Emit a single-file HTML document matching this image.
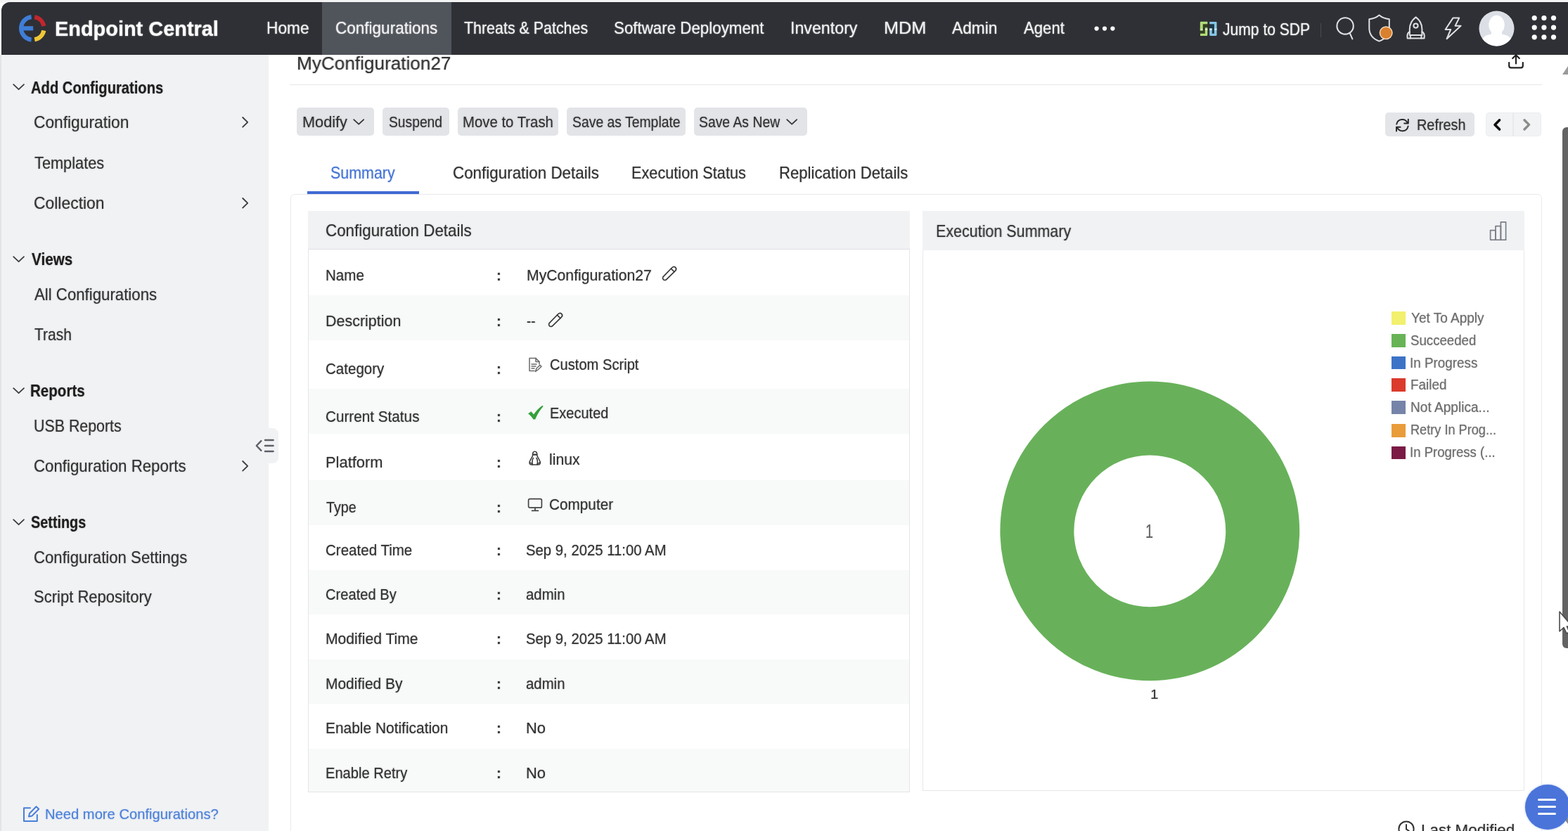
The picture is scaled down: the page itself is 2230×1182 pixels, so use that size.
<!DOCTYPE html>
<html lang="en">
<head>
<meta charset="utf-8">
<title>Endpoint Central - MyConfiguration27</title>
<style>
html,body{margin:0;padding:0;}
body{width:2230px;height:1182px;overflow:hidden;background:#fff;position:relative;font-family:"Liberation Sans",Arial,sans-serif;}
#app{position:absolute;left:0;top:0;width:2230px;height:1182px;overflow:hidden;will-change:transform;}
.t{position:absolute;white-space:nowrap;line-height:1;transform-origin:0 0;display:block;}
svg{overflow:visible;}
</style>
</head>
<body>
<div id="app">
<header>
<div style="position:absolute;left:0px;top:0px;width:2230px;height:4px;background:#f4f4f4;"></div>
<div style="position:absolute;left:1.5px;top:2.5px;width:2230px;height:75.5px;background:#2e3035;border-top-left-radius:12px;"></div>
<div style="position:absolute;left:458px;top:2.5px;width:183.6px;height:75.5px;background:#50545b;"></div>
<svg style="position:absolute;left:20px;top:15px;" width="52" height="52" viewBox="0 0 52 52">
<g fill="none" stroke-width="6.2" stroke-linecap="butt">
<path d="M24.6 9.1 A16.3 16.3 0 0 0 24.6 41.5" stroke="#3f7dd6"/>
<path d="M10 25.3 H27.2" stroke="#3f7dd6"/>
<path d="M29.2 9.3 A16.3 16.3 0 0 1 42.3 22.2" stroke="#c2262e"/>
<path d="M42.3 28.4 A16.3 16.3 0 0 1 29.2 41.3" stroke="#efc736"/>
</g></svg>
<span class="t" style="left:78.22px;top:27px;font-size:28.7px;color:#ffffff;transform:scaleX(1.0077);font-weight:700;text-shadow:0 0 1.7px rgba(255,255,255,0.85);">Endpoint Central</span>
<nav>
<span class="t" style="left:379.49px;top:29px;font-size:23.2px;color:#f2f2f2;transform:scaleX(0.9792);text-shadow:0 0 1.7px rgba(242,242,242,0.85);">Home</span>
<span class="t" style="left:476.81px;top:29px;font-size:23.2px;color:#f2f2f2;transform:scaleX(0.9714);text-shadow:0 0 1.7px rgba(242,242,242,0.85);">Configurations</span>
<span class="t" style="left:659.87px;top:29px;font-size:23.2px;color:#f2f2f2;transform:scaleX(0.9235);text-shadow:0 0 1.7px rgba(242,242,242,0.85);">Threats &amp; Patches</span>
<span class="t" style="left:873.34px;top:29px;font-size:23.2px;color:#f2f2f2;transform:scaleX(0.9630);text-shadow:0 0 1.7px rgba(242,242,242,0.85);">Software Deployment</span>
<span class="t" style="left:1123.81px;top:29px;font-size:23.2px;color:#f2f2f2;transform:scaleX(1.0010);text-shadow:0 0 1.7px rgba(242,242,242,0.85);">Inventory</span>
<span class="t" style="left:1256.87px;top:29px;font-size:23.2px;color:#f2f2f2;transform:scaleX(1.0914);text-shadow:0 0 1.7px rgba(242,242,242,0.85);">MDM</span>
<span class="t" style="left:1353.91px;top:29px;font-size:23.2px;color:#f2f2f2;transform:scaleX(0.9800);text-shadow:0 0 1.7px rgba(242,242,242,0.85);">Admin</span>
<span class="t" style="left:1455.51px;top:29px;font-size:23.2px;color:#f2f2f2;transform:scaleX(0.9554);text-shadow:0 0 1.7px rgba(242,242,242,0.85);">Agent</span>
<svg style="position:absolute;left:1550px;top:30px;" width="40" height="20" viewBox="0 0 40 20"><circle cx="9.6" cy="10.6" r="3.1" fill="#fff"/><circle cx="21" cy="10.6" r="3.1" fill="#fff"/><circle cx="32.4" cy="10.6" r="3.1" fill="#fff"/></svg>
</nav>
<svg style="position:absolute;left:1706px;top:30px;" width="26" height="22" viewBox="0 0 26 22">
<g>
<rect x="4.6" y="4" width="6.7" height="5.4" fill="#34421e"/><rect x="1" y="13.4" width="6.9" height="4.4" fill="#34421e"/>
<rect x="14.8" y="4" width="6.2" height="6" fill="#1f3947"/><rect x="17.6" y="9.8" width="3.4" height="8" fill="#1f3947"/>
<path d="M0.8 13.5 V2 Q0.8 0.8 2 0.8 H11.3 V4.2 H4.7 V13.5 Z" fill="#b2db78"/>
<path d="M7.8 9.2 H11.3 V19.8 Q11.3 20.9 10.2 20.9 H1 V17.7 H7.8 Z" fill="#b2db78"/>
<path d="M14.2 1 H23.4 Q24.5 1 24.5 2.1 V19.8 Q24.5 20.9 23.4 20.9 H15.3 Q14.2 20.9 14.2 19.8 V9.9 H17.7 V17.7 H20.9 V4.2 H14.2 Z" fill="#86c6e6"/>
<rect x="7.8" y="11" width="3.5" height="2" fill="#e6f5cd" opacity=".8"/><rect x="0.8" y="11.2" width="3.9" height="2" fill="#e6f5cd" opacity=".55"/>
<rect x="14.2" y="11" width="3.5" height="2" fill="#e3f4fc" opacity=".8"/><rect x="20.9" y="10.6" width="3.6" height="2.2" fill="#e3f4fc" opacity=".8"/>
</g></svg>
<span class="t" style="left:1739.02px;top:31px;font-size:23.2px;color:#f2f2f2;transform:scaleX(0.9087);text-shadow:0 0 1.7px rgba(242,242,242,0.85);">Jump to SDP</span>
<div style="position:absolute;left:1877.6px;top:32.6px;width:1.4px;height:20.6px;background:#484b52;"></div>
<svg style="position:absolute;left:1896px;top:20px;" width="36" height="40" viewBox="0 0 36 40"><g fill="none" stroke="#dfe0e3" stroke-width="2.1" stroke-linecap="round"><circle cx="17.1" cy="16.9" r="11.7"/><path d="M23.8 27.4 L27.4 35.4"/></g></svg>
<svg style="position:absolute;left:1942px;top:18px;" width="44" height="44" viewBox="0 0 44 44"><path d="M19.5 3.6 C15.2 7.4 10.2 8.9 5.3 9.2 V22 C5.3 31 11 37.4 19.5 40.6 C28 37.4 33.8 31 33.8 22 V9.2 C28.8 8.9 23.8 7.4 19.5 3.6 Z" fill="none" stroke="#dfe0e3" stroke-width="2" stroke-linejoin="round"/>
<circle cx="29.2" cy="28.8" r="9.5" fill="#f7dfc4"/><circle cx="29.2" cy="28.8" r="8.1" fill="#d9812f"/></svg>
<svg style="position:absolute;left:1996px;top:20px;" width="36" height="40" viewBox="0 0 36 40"><g fill="none" stroke="#dfe0e3" stroke-width="2" stroke-linejoin="round" stroke-linecap="round">
<path d="M17.6 4.4 C12 8.6 8.8 14.2 8.8 21.4 V30 H26.4 V21.4 C26.4 14.2 23.2 8.6 17.6 4.4 Z"/>
<circle cx="17.5" cy="16.6" r="3.1"/>
<path d="M8.8 25.2 C5.6 26.4 5 29.4 5.6 34.4 H9.8"/>
<path d="M26.4 25.2 C29.6 26.4 30.2 29.4 29.6 34.4 H25.4"/>
<path d="M9.8 30.2 V34.4 H25.4 V30.2"/>
</g></svg>
<svg style="position:absolute;left:2050px;top:20px;" width="32" height="40" viewBox="0 0 32 40"><path d="M16.4 5.6 H25.2 L19.6 16.8 H27.6 L7.6 35.2 L13.2 22 H5.6 Z" fill="none" stroke="#dfe0e3" stroke-width="2" stroke-linejoin="round"/></svg>
<svg style="position:absolute;left:2103px;top:15px;" width="51" height="51" viewBox="0 0 51 51"><circle cx="25.5" cy="25.5" r="25" fill="#dcdfe6"/>
<g fill="#ffffff"><ellipse cx="25.5" cy="20.4" rx="11.2" ry="13.6"/><rect x="18" y="28" width="15" height="9"/>
<path d="M5.14 40 C9 35 16 33 25.5 33 C35 33 42 35 45.86 40 A25 25 0 0 1 5.14 40 Z"/></g></svg>
<svg style="position:absolute;left:2170px;top:15px;" width="50" height="50" viewBox="0 0 50 50"><circle cx="12.2" cy="10.6" r="3.6" fill="#fff"/><circle cx="25.9" cy="10.6" r="3.6" fill="#fff"/><circle cx="39.5" cy="10.6" r="3.6" fill="#fff"/><circle cx="12.2" cy="24.1" r="3.6" fill="#fff"/><circle cx="25.9" cy="24.1" r="3.6" fill="#fff"/><circle cx="39.5" cy="24.1" r="3.6" fill="#fff"/><circle cx="12.2" cy="37.8" r="3.6" fill="#fff"/><circle cx="25.9" cy="37.8" r="3.6" fill="#fff"/><circle cx="39.5" cy="37.8" r="3.6" fill="#fff"/></svg>
</header>
<aside>
<div style="position:absolute;left:0px;top:78px;width:381.6px;height:1104px;background:#f1f2f4;"></div>
<div style="position:absolute;left:0px;top:78px;width:1.5px;height:1104px;background:#e3e4e6;"></div>
<div style="position:absolute;left:370px;top:609px;width:26px;height:50px;background:#f1f2f4;border-radius:0 8px 8px 0;"></div>
<svg style="position:absolute;left:17.5px;top:119px;" width="18" height="10" viewBox="0 0 18 10"><path d="M1.2 1.2 L8.6 8.2 L16 1.2" fill="none" stroke="#3c3c3c" stroke-width="1.8" stroke-linecap="round" stroke-linejoin="round"/></svg>
<span class="t" style="left:44.25px;top:114px;font-size:23.2px;color:#1d1d1d;transform:scaleX(0.8699);font-weight:700;text-shadow:0 0 1.7px rgba(29,29,29,0.5);">Add Configurations</span>
<svg style="position:absolute;left:17.5px;top:364px;" width="18" height="10" viewBox="0 0 18 10"><path d="M1.2 1.2 L8.6 8.2 L16 1.2" fill="none" stroke="#3c3c3c" stroke-width="1.8" stroke-linecap="round" stroke-linejoin="round"/></svg>
<span class="t" style="left:44.61px;top:358px;font-size:23.2px;color:#1d1d1d;transform:scaleX(0.8923);font-weight:700;text-shadow:0 0 1.7px rgba(29,29,29,0.5);">Views</span>
<svg style="position:absolute;left:17.5px;top:551px;" width="18" height="10" viewBox="0 0 18 10"><path d="M1.2 1.2 L8.6 8.2 L16 1.2" fill="none" stroke="#3c3c3c" stroke-width="1.8" stroke-linecap="round" stroke-linejoin="round"/></svg>
<span class="t" style="left:43.37px;top:545px;font-size:23.2px;color:#1d1d1d;transform:scaleX(0.8870);font-weight:700;text-shadow:0 0 1.7px rgba(29,29,29,0.5);">Reports</span>
<svg style="position:absolute;left:17.5px;top:738px;" width="18" height="10" viewBox="0 0 18 10"><path d="M1.2 1.2 L8.6 8.2 L16 1.2" fill="none" stroke="#3c3c3c" stroke-width="1.8" stroke-linecap="round" stroke-linejoin="round"/></svg>
<span class="t" style="left:44.18px;top:732px;font-size:23.2px;color:#1d1d1d;transform:scaleX(0.8557);font-weight:700;text-shadow:0 0 1.7px rgba(29,29,29,0.5);">Settings</span>
<span class="t" style="left:48.19px;top:163px;font-size:23.2px;color:#303030;transform:scaleX(0.9811);text-shadow:0 0 1.7px rgba(48,48,48,0.5);">Configuration</span>
<svg style="position:absolute;left:344px;top:166.4px;" width="10" height="16" viewBox="0 0 10 16"><path d="M1.2 1 L8.2 7.8 L1.2 14.6" fill="none" stroke="#3a3a3a" stroke-width="1.8" stroke-linecap="round" stroke-linejoin="round"/></svg>
<span class="t" style="left:48.86px;top:221px;font-size:23.2px;color:#303030;transform:scaleX(0.9384);text-shadow:0 0 1.7px rgba(48,48,48,0.5);">Templates</span>
<span class="t" style="left:48.19px;top:278px;font-size:23.2px;color:#303030;transform:scaleX(0.9875);text-shadow:0 0 1.7px rgba(48,48,48,0.5);">Collection</span>
<svg style="position:absolute;left:344px;top:281.4px;" width="10" height="16" viewBox="0 0 10 16"><path d="M1.2 1 L8.2 7.8 L1.2 14.6" fill="none" stroke="#3a3a3a" stroke-width="1.8" stroke-linecap="round" stroke-linejoin="round"/></svg>
<span class="t" style="left:49.31px;top:408px;font-size:23.2px;color:#303030;transform:scaleX(0.9582);text-shadow:0 0 1.7px rgba(48,48,48,0.5);">All Configurations</span>
<span class="t" style="left:48.88px;top:465px;font-size:23.2px;color:#303030;transform:scaleX(0.9061);text-shadow:0 0 1.7px rgba(48,48,48,0.5);">Trash</span>
<span class="t" style="left:47.70px;top:595px;font-size:23.2px;color:#303030;transform:scaleX(0.9217);text-shadow:0 0 1.7px rgba(48,48,48,0.5);">USB Reports</span>
<span class="t" style="left:48.22px;top:652px;font-size:23.2px;color:#303030;transform:scaleX(0.9604);text-shadow:0 0 1.7px rgba(48,48,48,0.5);">Configuration Reports</span>
<svg style="position:absolute;left:344px;top:655.0px;" width="10" height="16" viewBox="0 0 10 16"><path d="M1.2 1 L8.2 7.8 L1.2 14.6" fill="none" stroke="#3a3a3a" stroke-width="1.8" stroke-linecap="round" stroke-linejoin="round"/></svg>
<span class="t" style="left:48.22px;top:782px;font-size:23.2px;color:#303030;transform:scaleX(0.9565);text-shadow:0 0 1.7px rgba(48,48,48,0.5);">Configuration Settings</span>
<span class="t" style="left:48.35px;top:838px;font-size:23.2px;color:#303030;transform:scaleX(0.9501);text-shadow:0 0 1.7px rgba(48,48,48,0.5);">Script Repository</span>
<svg style="position:absolute;left:362px;top:622px;" width="30" height="24" viewBox="0 0 30 24"><g fill="none" stroke="#5d6066" stroke-width="2.4" stroke-linecap="round" stroke-linejoin="round"><path d="M9.4 5.2 L2.8 12 L9.4 18.8"/><path d="M15 4 H26.6 M15 12 H26.6 M15 20 H26.6"/></g></svg>
<svg style="position:absolute;left:32px;top:1145px;" width="26" height="26" viewBox="0 0 26 26"><g fill="none" stroke="#4a7fd9" stroke-width="2" stroke-linejoin="round" stroke-linecap="round"><path d="M11 4.2 H2 V23 H20.8 V14"/><path d="M9 16.5 L10 12 L19.5 2.2 L23.2 5.8 L13.5 15.5 Z"/></g></svg>
<span class="t" style="left:64.09px;top:1148px;font-size:20.8px;color:#4a7fd9;transform:scaleX(0.9700);text-shadow:0 0 1.7px rgba(74,127,217,0.5);">Need more Configurations?</span>
</aside>
<main>
<span class="t" style="left:421.60px;top:77px;font-size:26.4px;color:#303030;transform:scaleX(0.9907);text-shadow:0 0 1.7px rgba(48,48,48,0.5);">MyConfiguration27</span>
<svg style="position:absolute;left:2144px;top:76px;" width="24" height="24" viewBox="0 0 24 24"><g fill="none" stroke="#222" stroke-width="2.2" stroke-linecap="round" stroke-linejoin="round"><path d="M12 2.5 V14.5 M7.2 7 L12 2.2 L16.8 7"/><path d="M2.2 13 V17.5 Q2.2 20.4 5 20.4 H19 Q21.8 20.4 21.8 17.5 V13"/></g></svg>
<div style="position:absolute;left:412px;top:119.5px;width:1781px;height:1.6px;background:#e6e7e9;"></div>
<div style="position:absolute;left:422px;top:153px;width:110px;height:39.8px;background:#e3e4e8;border-radius:5px;"></div>
<div style="position:absolute;left:544px;top:153px;width:94.79999999999995px;height:39.8px;background:#e3e4e8;border-radius:5px;"></div>
<div style="position:absolute;left:651px;top:153px;width:143px;height:39.8px;background:#e3e4e8;border-radius:5px;"></div>
<div style="position:absolute;left:806px;top:153px;width:169px;height:39.8px;background:#e3e4e8;border-radius:5px;"></div>
<div style="position:absolute;left:987px;top:153px;width:161px;height:39.8px;background:#e3e4e8;border-radius:5px;"></div>
<span class="t" style="left:429.77px;top:164px;font-size:21.4px;color:#303030;transform:scaleX(1.0144);text-shadow:0 0 1.7px rgba(48,48,48,0.5);">Modify</span>
<span class="t" style="left:553.08px;top:164px;font-size:21.4px;color:#303030;transform:scaleX(0.9001);text-shadow:0 0 1.7px rgba(48,48,48,0.5);">Suspend</span>
<span class="t" style="left:658.08px;top:164px;font-size:21.4px;color:#303030;transform:scaleX(0.9510);text-shadow:0 0 1.7px rgba(48,48,48,0.5);">Move to Trash</span>
<span class="t" style="left:813.87px;top:164px;font-size:21.4px;color:#303030;transform:scaleX(0.9056);text-shadow:0 0 1.7px rgba(48,48,48,0.5);">Save as Template</span>
<span class="t" style="left:994.47px;top:164px;font-size:21.4px;color:#303030;transform:scaleX(0.9050);text-shadow:0 0 1.7px rgba(48,48,48,0.5);">Save As New</span>
<svg style="position:absolute;left:502px;top:168.5px;" width="18" height="10" viewBox="0 0 18 10"><path d="M1.2 1.2 L8.2 7.6 L15.2 1.2" fill="none" stroke="#333" stroke-width="1.8" stroke-linecap="round" stroke-linejoin="round"/></svg>
<svg style="position:absolute;left:1117.5px;top:168.5px;" width="18" height="10" viewBox="0 0 18 10"><path d="M1.2 1.2 L8.2 7.6 L15.2 1.2" fill="none" stroke="#333" stroke-width="1.8" stroke-linecap="round" stroke-linejoin="round"/></svg>
<div style="position:absolute;left:1969.7px;top:160.2px;width:127.1px;height:33.4px;background:#e4e5e8;border-radius:5px;"></div>
<svg style="position:absolute;left:1983px;top:167.6px;" width="24" height="22" viewBox="0 0 24 22"><g fill="none" stroke="#2a2a2a" stroke-width="2" stroke-linecap="round" stroke-linejoin="round">
<path d="M3.2 8.6 A8.2 8.2 0 0 1 18.8 7"/><path d="M19.8 1.8 V7.4 H14.2"/>
<path d="M19.6 11.6 A8.2 8.2 0 0 1 4 13.2"/><path d="M3 18.4 V12.8 H8.6"/></g></svg>
<span class="t" style="left:2015.12px;top:168px;font-size:21.4px;color:#303030;transform:scaleX(0.9295);text-shadow:0 0 1.7px rgba(48,48,48,0.5);">Refresh</span>
<div style="position:absolute;left:2113px;top:160.2px;width:79.2px;height:33.4px;background:#f2f3f4;border-radius:5px;box-shadow:inset 0 0 0 1px #ecedef;"></div>
<div style="position:absolute;left:2151.4px;top:160.2px;width:1.2px;height:33.4px;background:#e9eaec;"></div>
<svg style="position:absolute;left:2122px;top:167px;" width="16" height="22" viewBox="0 0 16 22"><path d="M10.6 3.8 L4 10.4 L10.6 17" fill="none" stroke="#111" stroke-width="3.6" stroke-linecap="round" stroke-linejoin="round"/></svg>
<svg style="position:absolute;left:2163px;top:167px;" width="16" height="22" viewBox="0 0 16 22"><path d="M5 3.8 L11.6 10.4 L5 17" fill="none" stroke="#8c8c8c" stroke-width="3.4" stroke-linecap="round" stroke-linejoin="round"/></svg>
<span class="t" style="left:470.38px;top:235px;font-size:23.2px;color:#4474d6;transform:scaleX(0.9244);text-shadow:0 0 1.7px rgba(68,116,214,0.5);">Summary</span>
<span class="t" style="left:643.61px;top:235px;font-size:23.2px;color:#303030;transform:scaleX(0.9656);text-shadow:0 0 1.7px rgba(48,48,48,0.5);">Configuration Details</span>
<span class="t" style="left:898.17px;top:235px;font-size:23.2px;color:#303030;transform:scaleX(0.9359);text-shadow:0 0 1.7px rgba(48,48,48,0.5);">Execution Status</span>
<span class="t" style="left:1108.13px;top:235px;font-size:23.2px;color:#303030;transform:scaleX(0.9545);text-shadow:0 0 1.7px rgba(48,48,48,0.5);">Replication Details</span>
<div style="position:absolute;left:437px;top:271.6px;width:158.6px;height:4.2px;background:#4169d2;"></div>
<div style="position:absolute;left:413px;top:275.8px;width:1779.6px;height:930px;background:transparent;border:1.6px solid #e9eaec;border-radius:6px;box-sizing:border-box;"></div>
<div style="position:absolute;left:438px;top:299.6px;width:856px;height:827.8px;background:#fff;box-sizing:border-box;border:1.4px solid #e4e5e7;"></div>
<div style="position:absolute;left:438px;top:299.6px;width:856px;height:55px;background:#f1f2f4;box-sizing:border-box;border-bottom:1.4px solid #dfe0e3;"></div>
<span class="t" style="left:463.21px;top:317px;font-size:23.2px;color:#303030;transform:scaleX(0.9647);text-shadow:0 0 1.7px rgba(48,48,48,0.5);">Configuration Details</span>
<div style="position:absolute;left:439.2px;top:420px;width:853.6px;height:64.39999999999998px;background:#f8f9f9;"></div>
<div style="position:absolute;left:439.2px;top:553px;width:853.6px;height:64px;background:#f8f9f9;"></div>
<div style="position:absolute;left:439.2px;top:683px;width:853.6px;height:64px;background:#f8f9f9;"></div>
<div style="position:absolute;left:439.2px;top:811px;width:853.6px;height:63px;background:#f8f9f9;"></div>
<div style="position:absolute;left:439.2px;top:937.6px;width:853.6px;height:63.39999999999998px;background:#f8f9f9;"></div>
<div style="position:absolute;left:439.2px;top:1065px;width:853.6px;height:61.40000000000009px;background:#f8f9f9;"></div>
<span class="t" style="left:462.66px;top:381px;font-size:21.6px;color:#303030;transform:scaleX(0.9530);text-shadow:0 0 1.7px rgba(48,48,48,0.5);">Name</span>
<span class="t" style="left:705.57px;top:381px;font-size:21.6px;color:#3c3c3c;transform:scaleX(0.9516);font-weight:700;text-shadow:0 0 1.7px rgba(60,60,60,0.5);">:</span>
<span class="t" style="left:748.81px;top:381px;font-size:21.6px;color:#303030;transform:scaleX(0.9815);text-shadow:0 0 1.7px rgba(48,48,48,0.5);">MyConfiguration27</span>
<span class="t" style="left:462.59px;top:446px;font-size:21.6px;color:#303030;transform:scaleX(0.9948);text-shadow:0 0 1.7px rgba(48,48,48,0.5);">Description</span>
<span class="t" style="left:705.57px;top:446px;font-size:21.6px;color:#3c3c3c;transform:scaleX(0.9516);font-weight:700;text-shadow:0 0 1.7px rgba(60,60,60,0.5);">:</span>
<span class="t" style="left:748.91px;top:446px;font-size:21.6px;color:#303030;transform:scaleX(0.8740);text-shadow:0 0 1.7px rgba(48,48,48,0.5);">--</span>
<span class="t" style="left:463.31px;top:514px;font-size:21.6px;color:#303030;transform:scaleX(0.9516);text-shadow:0 0 1.7px rgba(48,48,48,0.5);">Category</span>
<span class="t" style="left:705.57px;top:514px;font-size:21.6px;color:#3c3c3c;transform:scaleX(0.9516);font-weight:700;text-shadow:0 0 1.7px rgba(60,60,60,0.5);">:</span>
<span class="t" style="left:781.93px;top:508px;font-size:21.6px;color:#303030;transform:scaleX(0.9327);text-shadow:0 0 1.7px rgba(48,48,48,0.5);">Custom Script</span>
<span class="t" style="left:463.30px;top:582px;font-size:21.6px;color:#303030;transform:scaleX(0.9588);text-shadow:0 0 1.7px rgba(48,48,48,0.5);">Current Status</span>
<span class="t" style="left:705.57px;top:582px;font-size:21.6px;color:#3c3c3c;transform:scaleX(0.9516);font-weight:700;text-shadow:0 0 1.7px rgba(60,60,60,0.5);">:</span>
<span class="t" style="left:781.71px;top:577px;font-size:21.6px;color:#303030;transform:scaleX(0.9265);text-shadow:0 0 1.7px rgba(48,48,48,0.5);">Executed</span>
<span class="t" style="left:462.55px;top:647px;font-size:21.6px;color:#303030;transform:scaleX(1.0141);text-shadow:0 0 1.7px rgba(48,48,48,0.5);">Platform</span>
<span class="t" style="left:705.57px;top:647px;font-size:21.6px;color:#3c3c3c;transform:scaleX(0.9516);font-weight:700;text-shadow:0 0 1.7px rgba(60,60,60,0.5);">:</span>
<span class="t" style="left:781.32px;top:643px;font-size:21.6px;color:#303030;transform:scaleX(0.9805);text-shadow:0 0 1.7px rgba(48,48,48,0.5);">linux</span>
<span class="t" style="left:463.91px;top:711px;font-size:21.6px;color:#303030;transform:scaleX(0.9100);text-shadow:0 0 1.7px rgba(48,48,48,0.5);">Type</span>
<span class="t" style="left:705.57px;top:711px;font-size:21.6px;color:#3c3c3c;transform:scaleX(0.9516);font-weight:700;text-shadow:0 0 1.7px rgba(60,60,60,0.5);">:</span>
<span class="t" style="left:781.30px;top:707px;font-size:21.6px;color:#303030;transform:scaleX(0.9608);text-shadow:0 0 1.7px rgba(48,48,48,0.5);">Computer</span>
<span class="t" style="left:463.31px;top:772px;font-size:21.6px;color:#303030;transform:scaleX(0.9509);text-shadow:0 0 1.7px rgba(48,48,48,0.5);">Created Time</span>
<span class="t" style="left:705.57px;top:772px;font-size:21.6px;color:#3c3c3c;transform:scaleX(0.9516);font-weight:700;text-shadow:0 0 1.7px rgba(60,60,60,0.5);">:</span>
<span class="t" style="left:748.43px;top:772px;font-size:21.6px;color:#303030;transform:scaleX(0.9410);text-shadow:0 0 1.7px rgba(48,48,48,0.5);">Sep 9, 2025 11:00 AM</span>
<span class="t" style="left:463.33px;top:835px;font-size:21.6px;color:#303030;transform:scaleX(0.9327);text-shadow:0 0 1.7px rgba(48,48,48,0.5);">Created By</span>
<span class="t" style="left:705.57px;top:835px;font-size:21.6px;color:#3c3c3c;transform:scaleX(0.9516);font-weight:700;text-shadow:0 0 1.7px rgba(60,60,60,0.5);">:</span>
<span class="t" style="left:748.48px;top:835px;font-size:21.6px;color:#303030;transform:scaleX(0.9432);text-shadow:0 0 1.7px rgba(48,48,48,0.5);">admin</span>
<span class="t" style="left:462.62px;top:898px;font-size:21.6px;color:#303030;transform:scaleX(0.9788);text-shadow:0 0 1.7px rgba(48,48,48,0.5);">Modified Time</span>
<span class="t" style="left:705.57px;top:898px;font-size:21.6px;color:#3c3c3c;transform:scaleX(0.9516);font-weight:700;text-shadow:0 0 1.7px rgba(60,60,60,0.5);">:</span>
<span class="t" style="left:748.43px;top:898px;font-size:21.6px;color:#303030;transform:scaleX(0.9410);text-shadow:0 0 1.7px rgba(48,48,48,0.5);">Sep 9, 2025 11:00 AM</span>
<span class="t" style="left:462.63px;top:962px;font-size:21.6px;color:#303030;transform:scaleX(0.9701);text-shadow:0 0 1.7px rgba(48,48,48,0.5);">Modified By</span>
<span class="t" style="left:705.57px;top:962px;font-size:21.6px;color:#3c3c3c;transform:scaleX(0.9516);font-weight:700;text-shadow:0 0 1.7px rgba(60,60,60,0.5);">:</span>
<span class="t" style="left:748.48px;top:962px;font-size:21.6px;color:#303030;transform:scaleX(0.9432);text-shadow:0 0 1.7px rgba(48,48,48,0.5);">admin</span>
<span class="t" style="left:462.63px;top:1025px;font-size:21.6px;color:#303030;transform:scaleX(0.9684);text-shadow:0 0 1.7px rgba(48,48,48,0.5);">Enable Notification</span>
<span class="t" style="left:705.57px;top:1025px;font-size:21.6px;color:#3c3c3c;transform:scaleX(0.9516);font-weight:700;text-shadow:0 0 1.7px rgba(60,60,60,0.5);">:</span>
<span class="t" style="left:747.55px;top:1025px;font-size:21.6px;color:#303030;transform:scaleX(1.0148);text-shadow:0 0 1.7px rgba(48,48,48,0.5);">No</span>
<span class="t" style="left:462.70px;top:1089px;font-size:21.6px;color:#303030;transform:scaleX(0.9323);text-shadow:0 0 1.7px rgba(48,48,48,0.5);">Enable Retry</span>
<span class="t" style="left:705.57px;top:1089px;font-size:21.6px;color:#3c3c3c;transform:scaleX(0.9516);font-weight:700;text-shadow:0 0 1.7px rgba(60,60,60,0.5);">:</span>
<span class="t" style="left:747.55px;top:1089px;font-size:21.6px;color:#303030;transform:scaleX(1.0148);text-shadow:0 0 1.7px rgba(48,48,48,0.5);">No</span>
<svg style="position:absolute;left:939.5px;top:377.1px;" width="24" height="24" viewBox="0 0 24 24"><g transform="translate(12 12) rotate(-45)" fill="none" stroke="#3a3a3a" stroke-width="1.7" stroke-linejoin="round" stroke-linecap="round"><path d="M-12.2 0 C-12.2 -1.2 -11.4 -2.4 -9.8 -3 L8.8 -3.2 Q12.2 -3.2 12.2 0 Q12.2 3.2 8.8 3.2 L-9.8 3 C-11.4 2.4 -12.2 1.2 -12.2 0 Z"/><path d="M6.6 -3.2 V3.2"/></g></svg>
<svg style="position:absolute;left:777.5px;top:442.5px;" width="24" height="24" viewBox="0 0 24 24"><g transform="translate(12 12) rotate(-45)" fill="none" stroke="#3a3a3a" stroke-width="1.7" stroke-linejoin="round" stroke-linecap="round"><path d="M-12.2 0 C-12.2 -1.2 -11.4 -2.4 -9.8 -3 L8.8 -3.2 Q12.2 -3.2 12.2 0 Q12.2 3.2 8.8 3.2 L-9.8 3 C-11.4 2.4 -12.2 1.2 -12.2 0 Z"/><path d="M6.6 -3.2 V3.2"/></g></svg>
<svg style="position:absolute;left:751px;top:508px;" width="20" height="22" viewBox="0 0 20 22"><g fill="none" stroke="#6a6a6a" stroke-width="1.5" stroke-linejoin="round" stroke-linecap="round">
<path d="M11 1.6 H2 V19.6 H9"/><path d="M11 1.6 L16 6.6 V10"/><path d="M11 1.6 V6.6 H16"/>
<path d="M5 10 H12 M5 13 H11 M5 16 H9"/><path d="M10.5 20.5 L12 16 L17 11.2 L19 13.2 L14 18 Z"/></g></svg>
<svg style="position:absolute;left:750px;top:576px;" width="24" height="22" viewBox="0 0 24 22"><path d="M1 12.6 L5.4 9.2 L9 13.4 C12.4 8.4 16.6 4 21.6 0.8 L22.6 2 C18 7.2 14 13.4 11.2 20.6 H8.4 C6.4 17.2 4 14.6 1 12.6 Z" fill="#36a03c"/></svg>
<svg style="position:absolute;left:751px;top:641px;" width="20" height="22" viewBox="0 0 20 22"><g fill="none" stroke="#3c3c3c" stroke-width="1.6" stroke-linejoin="round" stroke-linecap="round">
<path d="M9.6 1.2 C7 1.2 6.4 3.6 6.6 6.4 C6.8 8.6 3.4 11.8 2.2 16 C1.6 18.4 3 20 5 20 H14.4 C16.4 20 17.8 18.4 17.2 16 C16 11.8 12.6 8.6 12.8 6.4 C13 3.6 12.2 1.2 9.6 1.2 Z"/>
<path d="M7.4 10.4 C5.6 13.4 5.6 16.6 6.4 19.8 M12 10.4 C13.8 13.4 13.8 16.6 13 19.8"/><path d="M7.6 5.6 H11.8" stroke-width="2.2"/>
<path d="M2.6 17 L6 18.6 M16.8 17 L13.4 18.6"/></g></svg>
<svg style="position:absolute;left:750px;top:708px;" width="22" height="20" viewBox="0 0 22 20"><g fill="none" stroke="#444" stroke-width="1.7" stroke-linejoin="round" stroke-linecap="round"><rect x="1.6" y="1.6" width="18.8" height="12.6" rx="2"/><path d="M11 14.4 V18 M6.6 18.4 H15.4"/></g></svg>
<div style="position:absolute;left:1311.6px;top:299.6px;width:856px;height:825px;background:#fff;box-sizing:border-box;border:1.4px solid #e6e7e9;"></div>
<div style="position:absolute;left:1311.6px;top:299.6px;width:856px;height:56.4px;background:#f1f2f4;"></div>
<span class="t" style="left:1330.59px;top:318px;font-size:23.2px;color:#303030;transform:scaleX(0.9259);text-shadow:0 0 1.7px rgba(48,48,48,0.5);">Execution Summary</span>
<svg style="position:absolute;left:2118px;top:313px;" width="26" height="30" viewBox="0 0 26 30"><g fill="none" stroke="#7b7e86" stroke-width="1.7" stroke-linejoin="round"><path d="M1.6 28 V14.6 H9 V28"/><path d="M9 28 V8.6 H16.4 V28"/><path d="M16.4 28 V2.8 H23.6 V28"/><path d="M1 28.2 H24.4"/></g></svg>
<svg style="position:absolute;left:1415px;top:535px;" width="440" height="440" viewBox="0 0 440 440"><circle cx="220.3" cy="220.4" r="160.4" fill="none" stroke="#68b15a" stroke-width="105"/></svg>
<span class="t" style="left:1629.13px;top:742px;font-size:27.6px;color:#666;transform:scaleX(0.7221);text-shadow:0 0 1.7px rgba(102,102,102,0.5);">1</span>
<span class="t" style="left:1635.78px;top:979px;font-size:18.8px;color:#333;transform:scaleX(1.0983);text-shadow:0 0 1.7px rgba(51,51,51,0.5);">1</span>
<div style="position:absolute;left:1978.6px;top:443.2px;width:20.3px;height:18.6px;background:#f2f06c;"></div>
<span class="t" style="left:2006.73px;top:442px;font-size:20.5px;color:#6a6a6a;transform:scaleX(0.9269);text-shadow:0 0 1.7px rgba(106,106,106,0.5);">Yet To Apply</span>
<div style="position:absolute;left:1978.6px;top:475.1px;width:20.3px;height:18.6px;background:#68b356;"></div>
<span class="t" style="left:2006.30px;top:474px;font-size:20.5px;color:#6a6a6a;transform:scaleX(0.9099);text-shadow:0 0 1.7px rgba(106,106,106,0.5);">Succeeded</span>
<div style="position:absolute;left:1978.6px;top:506.8px;width:20.3px;height:18.6px;background:#3d73c7;"></div>
<span class="t" style="left:2005.41px;top:506px;font-size:20.5px;color:#6a6a6a;transform:scaleX(0.9198);text-shadow:0 0 1.7px rgba(106,106,106,0.5);">In Progress</span>
<div style="position:absolute;left:1978.6px;top:538.2px;width:20.3px;height:18.6px;background:#db3a2c;"></div>
<span class="t" style="left:2005.60px;top:537px;font-size:20.5px;color:#6a6a6a;transform:scaleX(0.9216);text-shadow:0 0 1.7px rgba(106,106,106,0.5);">Failed</span>
<div style="position:absolute;left:1978.6px;top:570.1px;width:20.3px;height:18.6px;background:#7584a8;"></div>
<span class="t" style="left:2005.58px;top:569px;font-size:20.5px;color:#6a6a6a;transform:scaleX(0.9314);text-shadow:0 0 1.7px rgba(106,106,106,0.5);">Not Applica...</span>
<div style="position:absolute;left:1978.6px;top:603px;width:20.3px;height:18.6px;background:#e99c3a;"></div>
<span class="t" style="left:2005.66px;top:601px;font-size:20.5px;color:#6a6a6a;transform:scaleX(0.8853);text-shadow:0 0 1.7px rgba(106,106,106,0.5);">Retry In Prog...</span>
<div style="position:absolute;left:1978.6px;top:634.7px;width:20.3px;height:18.6px;background:#7a1a45;"></div>
<span class="t" style="left:2005.44px;top:633px;font-size:20.5px;color:#6a6a6a;transform:scaleX(0.9053);text-shadow:0 0 1.7px rgba(106,106,106,0.5);">In Progress (...</span>
<svg style="position:absolute;left:1988px;top:1167px;" width="24" height="24" viewBox="0 0 24 24"><g fill="none" stroke="#333" stroke-width="2" stroke-linecap="round"><circle cx="12" cy="12" r="10.6"/><path d="M12 6 V12.4 L16 15"/></g></svg>
<span class="t" style="left:2021.21px;top:1170px;font-size:22.6px;color:#303030;transform:scaleX(0.9918);text-shadow:0 0 1.7px rgba(48,48,48,0.5);">Last Modified</span>
</main>
<div style="position:absolute;left:2193.4px;top:78px;width:36.6px;height:1104px;background:#fdfdfd;z-index:0;display:none;"></div>
<svg style="position:absolute;left:2218px;top:90px;" width="12" height="18" viewBox="0 0 12 18"><path d="M4 16 L12 4 V16 Z" fill="#9a9a9a"/></svg>
<div style="position:absolute;left:2221.6px;top:181.4px;width:12px;height:740.6px;background:#636363;border-radius:6px 0 0 6px;"></div>
<svg style="position:absolute;left:2222px;top:1160px;" width="8" height="16" viewBox="0 0 8 16"><path d="M2 4 L8 12 V2 Z" fill="#8a8a8a"/></svg>
<div style="position:absolute;left:2168.6px;top:1116px;width:64px;height:64px;background:#4a74d9;border-radius:50%;box-shadow:0 0 3px rgba(74,116,217,.5);"></div>
<div style="position:absolute;left:2186.6px;top:1135.5px;width:26.6px;height:3px;background:#fff;border-radius:2px;"></div>
<div style="position:absolute;left:2186.6px;top:1145.9px;width:26.6px;height:3px;background:#fff;border-radius:2px;"></div>
<div style="position:absolute;left:2186.6px;top:1156.1px;width:26.6px;height:3px;background:#fff;border-radius:2px;"></div>
<svg style="position:absolute;left:2216px;top:868px;" width="16" height="36" viewBox="0 0 16 36"><path d="M2 2 V30 L8 24.5 L12 33 L16 31 L12.4 23 H20 Z" fill="#fff" stroke="#4a4a4a" stroke-width="1.6" stroke-linejoin="round"/></svg>
</div>
</body>
</html>
